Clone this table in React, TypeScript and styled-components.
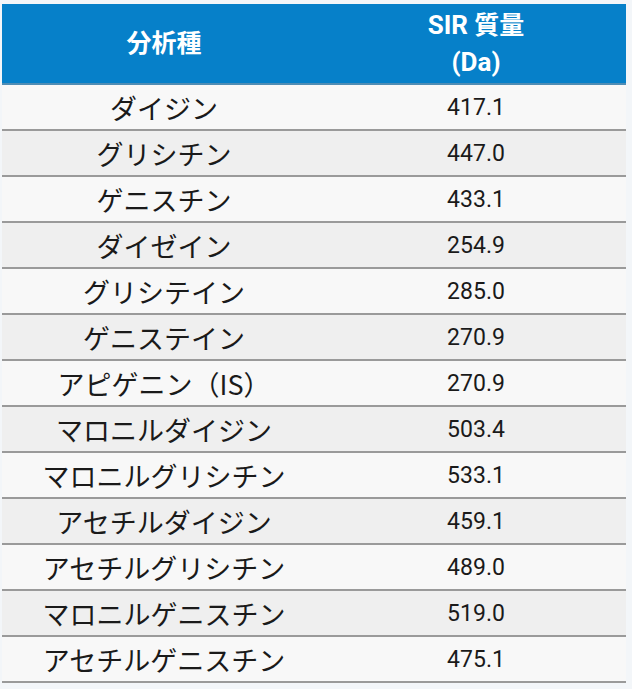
import React from "react";
import styled, { createGlobalStyle } from "styled-components";

const Global = createGlobalStyle`
  html, body { margin: 0; padding: 0; background: #f3f6f9; }
  body { font-family: Roboto, "Noto Sans CJK JP", sans-serif; }
`;

const Page = styled.div`
  padding: 4px 6px 0 2px;
`;

const Table = styled.table`
  width: 624px;
  border-collapse: collapse;
  table-layout: fixed;
`;

const HeadCell = styled.th<{ $w: number }>`
  width: ${(p) => p.$w}px;
  height: 79px;
  padding: 0;
  background: #0680c9;
  color: #ffffff;
  font-family: Roboto, "Noto Sans CJK JP", sans-serif;
  font-weight: 700;
  font-size: 25px;
  line-height: 37px;
  text-align: center;
  vertical-align: middle;
  border-bottom: 2px solid #4f8db5;
`;

const HeadLatin = styled.span`
  font-size: 26px;
`;

const Row = styled.tr<{ $alt: boolean }>`
  background: ${(p) => (p.$alt ? "#efefef" : "#f8f8f8")};
`;

const Cell = styled.td<{ $kind: "name" | "num" }>`
  height: 44px;
  padding: 0;
  text-align: center;
  vertical-align: middle;
  color: #1a1a1a;
  border-bottom: 2px solid #9a9a9a;
  font-family: ${(p) =>
    p.$kind === "name"
      ? `"Noto Sans CJK JP", sans-serif`
      : `Roboto, "Noto Sans CJK JP", sans-serif`};
  font-size: ${(p) => (p.$kind === "name" ? "27px" : "23px")};
  font-weight: 400;
  line-height: 1;
`;

const rows: [string, string][] = [
  ["ダイジン", "417.1"],
  ["グリシチン", "447.0"],
  ["ゲニスチン", "433.1"],
  ["ダイゼイン", "254.9"],
  ["グリシテイン", "285.0"],
  ["ゲニステイン", "270.9"],
  ["アピゲニン（IS）", "270.9"],
  ["マロニルダイジン", "503.4"],
  ["マロニルグリシチン", "533.1"],
  ["アセチルダイジン", "459.1"],
  ["アセチルグリシチン", "489.0"],
  ["マロニルゲニスチン", "519.0"],
  ["アセチルゲニスチン", "475.1"],
];

export default function App() {
  return (
    <>
      <Global />
      <Page>
        <Table>
          <thead>
            <tr>
              <HeadCell $w={324}>分析種</HeadCell>
              <HeadCell $w={300}>
                <HeadLatin>SIR</HeadLatin> 質量
                <br />
                <HeadLatin>(Da)</HeadLatin>
              </HeadCell>
            </tr>
          </thead>
          <tbody>
            {rows.map(([name, mass], i) => (
              <Row key={name} $alt={i % 2 === 1}>
                <Cell $kind="name">{name}</Cell>
                <Cell $kind="num">{mass}</Cell>
              </Row>
            ))}
          </tbody>
        </Table>
      </Page>
    </>
  );
}
